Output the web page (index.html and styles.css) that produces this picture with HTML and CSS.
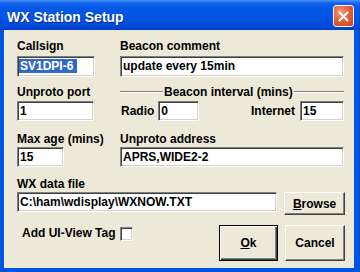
FILE: index.html
```html
<!DOCTYPE html>
<html>
<head>
<meta charset="utf-8">
<link rel="stylesheet" href="styles.css">
</head>
<body>
<div class="window">
  <div class="titlebar">
    <div class="title">WX Station Setup</div>
    <div class="close">
      <svg width="13" height="13" viewBox="0 0 13 13"><path d="M2.5 2.5L10.5 10.5M10.5 2.5L2.5 10.5" stroke="#fff" stroke-width="2.2" stroke-linecap="round"/></svg>
    </div>
  </div>
  <div class="body">
    <div class="row">
      <div class="c1">
        <div class="label">Callsign</div>
        <div class="field tall w-call"><span class="sel">SV1DPI-6</span></div>
      </div>
      <div class="c2">
        <div class="label">Beacon comment</div>
        <div class="field tall w-full">update every 15min</div>
      </div>
    </div>

    <div class="row r2">
      <div class="c1">
        <div class="label">Unproto port</div>
        <div class="field mt2 w-port">1</div>
      </div>
      <div class="c2">
        <div class="grouphead">
          <div class="gline gl-left"></div>
          <div class="gtext">Beacon interval (mins)</div>
          <div class="gline gl-right"></div>
        </div>
        <div class="intervals">
          <div class="ilabel radio-l">Radio</div>
          <div class="field w-radio">0</div>
          <div class="spacer"></div>
          <div class="ilabel inet-l">Internet</div>
          <div class="field w-inet">15</div>
        </div>
      </div>
    </div>

    <div class="row r3">
      <div class="c1">
        <div class="label">Max age (mins)</div>
        <div class="field mt1 w-age">15</div>
      </div>
      <div class="c2">
        <div class="label">Unproto address</div>
        <div class="field mt1 w-full">APRS,WIDE2-2</div>
      </div>
    </div>

    <div class="r4">
      <div class="label">WX data file</div>
      <div class="filerow">
        <div class="field w-file">C:\ham\wdisplay\WXNOW.TXT</div>
        <div class="btn browse"><span class="u">B</span>rowse</div>
      </div>
    </div>

    <div class="r5">
      <div class="tag">
        <div class="label">Add UI-View Tag</div>
        <div class="check"></div>
      </div>
      <div class="btn ok default"><span class="u">O</span>k</div>
      <div class="btn cancel">Cancel</div>
    </div>
  </div>
</div>
</body>
</html>
```

FILE: styles.css
```css
* { box-sizing: border-box; }
html, body { margin: 0; padding: 0; }
body {
  width: 360px;
  height: 272px;
  overflow: hidden;
  font-family: "Liberation Sans", Arial, sans-serif;
  font-weight: bold;
  font-size: 12px;
  color: #000;
  background: #0054e3;
}
.window {
  width: 360px;
  height: 272px;
  background: #0054e3;
  display: flex;
  flex-direction: column;
}
.titlebar {
  height: 30px;
  flex: none;
  display: flex;
  justify-content: space-between;
  align-items: flex-start;
  padding: 0 6px 0 7px;
  background: linear-gradient(#4a95f7 0, #1464ec 3px, #0058e6 8px, #0054e3 18px, #004ad8 26px, #003fc4 30px);
}
.title {
  margin-top: 9px;
  color: #fff;
  font-size: 14px;
  line-height: 16px;
  text-shadow: 1px 1px 0 #0a2a8a;
}
.close {
  margin-top: 5px;
  width: 21px;
  height: 22px;
  border: 1px solid #f4f4f4;
  border-radius: 3px;
  background: radial-gradient(circle at 35% 30%, #f29a73 0, #e2623a 45%, #c9411d 100%);
  display: flex;
  align-items: center;
  justify-content: center;
}
.body {
  flex: 1;
  margin: 0 6px 4px 4px;
  background: #ece9d8;
  padding: 9px 9px 0 12px;
  border-left: 1px solid #f5f4ee;
}
.row { display: flex; }
.c1 { width: 103px; flex: none; }
.c2 { width: 224px; flex: none; }
.r2 { margin-top: 8px; }
.r3 { margin-top: 11px; }
.r4 { margin-top: 10px; }
.label {
  height: 14px;
  line-height: 14px;
  white-space: nowrap;
}
.field {
  background: #fff;
  height: 20px;
  line-height: 18px;
  padding-left: 2px;
  white-space: nowrap;
  overflow: hidden;
  border-top: 1px solid #808080;
  border-left: 1px solid #808080;
  border-bottom: 1px solid #fff;
  border-right: 1px solid #fff;
  box-shadow: inset 1px 1px 0 #404040, inset -1px -1px 0 #d4d0c8;
}
.field.tall { height: 21px; line-height: 19px; margin-top: 3px; }
.mt1 { margin-top: 1px; }
.mt2 { margin-top: 2px; }
.w-call { width: 78px; padding-left: 1px; }
.w-full { width: 224px; }
.w-port { width: 77px; }
.w-age { width: 47px; }
.w-radio { width: 41px; }
.w-inet { width: 44px; }
.w-file { width: 261px; }
.sel {
  display: inline-block;
  background: #316ac5;
  color: #fff;
  line-height: 14px;
  padding: 0 4px 0 1px;
  vertical-align: middle;
  margin-top: -2px;
}
.grouphead {
  height: 14px;
  display: flex;
  align-items: center;
}
.gline {
  height: 2px;
  border-top: 1px solid #808080;
  border-bottom: 1px solid #fff;
}
.gl-left { width: 43px; }
.gl-right { flex: 1; }
.gtext { padding: 0 1px; line-height: 14px; white-space: nowrap; }
.intervals {
  margin-top: 2px;
  display: flex;
  align-items: center;
}
.ilabel { white-space: nowrap; line-height: 14px; }
.radio-l { margin-left: 1px; margin-right: 4px; }
.inet-l { margin-right: 5px; }
.spacer { flex: 1; }
.filerow {
  margin-top: 1px;
  display: flex;
  align-items: flex-start;
}
.btn {
  background: #ece9d8;
  display: flex;
  align-items: center;
  justify-content: center;
  border: 1px solid;
  border-color: #fff #404040 #404040 #fff;
  box-shadow: inset -1px -1px 0 #808080;
  white-space: nowrap;
}
.btn.default {
  border: 1px solid #000;
  box-shadow: inset 1px 1px 0 #fff, inset -1px -1px 0 #404040, inset -2px -2px 0 #808080;
}
.u { text-decoration: underline; }
.browse { width: 61px; height: 23px; margin-left: 7px; }
.r5 {
  margin-top: 10px;
  display: flex;
  align-items: flex-start;
}
.tag {
  display: flex;
  align-items: flex-start;
  padding-left: 5px;
  margin-right: auto;
}
.tag .label { margin-top: 1px; }
.check {
  width: 13px;
  height: 14px;
  margin-left: 4px;
  margin-top: 2px;
  background: #fff;
  border-top: 1px solid #808080;
  border-left: 1px solid #808080;
  border-bottom: 1px solid #fff;
  border-right: 1px solid #fff;
  box-shadow: inset 1px 1px 0 #404040, inset -1px -1px 0 #d4d0c8;
}
.ok { width: 59px; height: 36px; }
.cancel { width: 60px; height: 36px; margin-left: 7px; }
```
